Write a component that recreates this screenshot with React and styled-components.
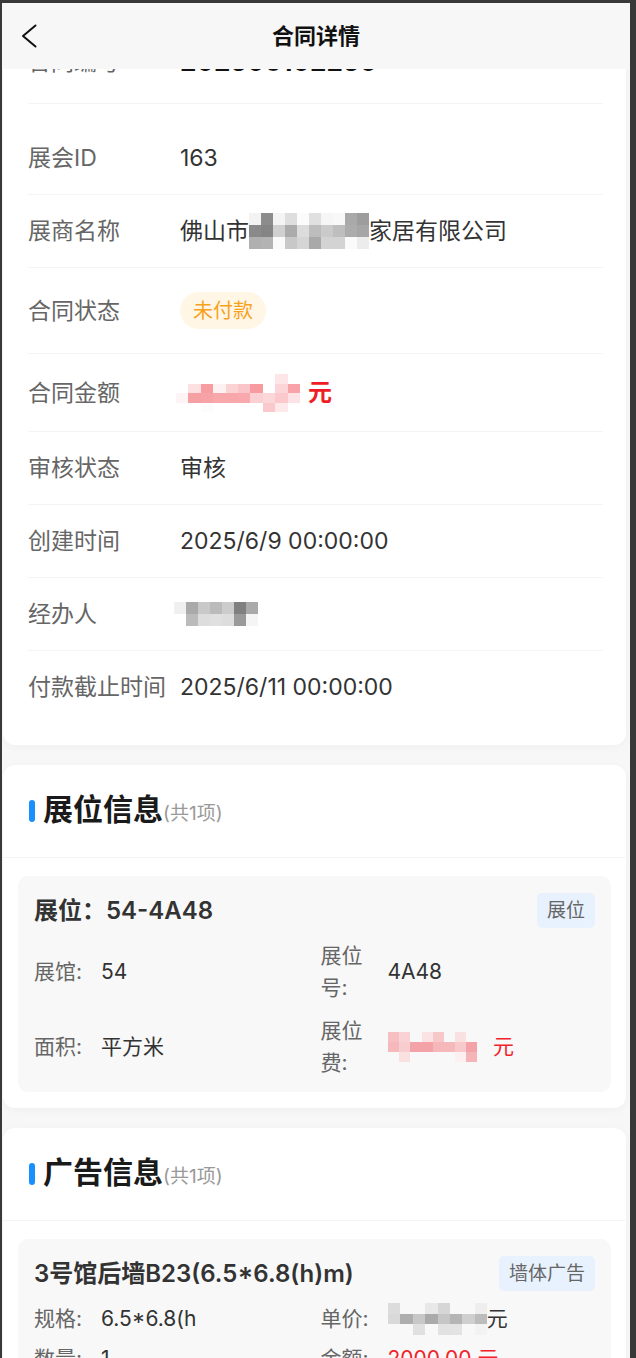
import React, { useLayoutEffect, useRef } from 'react';
import styled, { createGlobalStyle } from 'styled-components';

const GlobalStyle = createGlobalStyle`
  html, body {
    margin: 0;
    padding: 0;
    height: 100%;
    overflow: hidden;
    background: #393939;
  }

  body {
    font-family: Inter, "Noto Sans CJK SC", sans-serif;
    -webkit-font-smoothing: antialiased;
  }

  * {
    box-sizing: border-box;
  }
`;

const Screen = styled.div`
  display: flex;
  flex-direction: column;
  height: calc(100vh - 3px);
  margin: 3px 6px 0 2px;
  background: #f7f7f8;
  overflow: hidden;
`;

const NavBar = styled.header`
  flex: 0 0 66px;
  display: grid;
  grid-template-columns: 80px 1fr 80px;
  align-items: center;
  background: #f7f7f7;
`;

const BackButton = styled.button`
  display: flex;
  align-items: center;
  height: 40px;
  padding: 0 0 0 19px;
  border: 0;
  background: none;
  cursor: pointer;
`;

const NavTitle = styled.h1`
  margin: 0;
  text-align: center;
  font-size: 22px;
  line-height: 30px;
  font-weight: 700;
  color: #111;
`;

const ScrollArea = styled.main`
  flex: 1;
  overflow-y: auto;
  padding: 20px 4px 40px 1px;
  scrollbar-width: none;

  &::-webkit-scrollbar {
    display: none;
  }
`;

const Card = styled.section`
  background: #fff;
  border-radius: 12px;
  box-shadow: 0 2px 10px rgba(0, 0, 0, 0.035);
  margin-bottom: 20px;
`;

const InfoCard = styled(Card)`
  padding: 8px 23px 22px 25px;
`;

const InfoRow = styled.div`
  display: flex;
  align-items: center;
  padding: 20px 0;
  border-bottom: 1px solid #f4f4f4;

  &:last-child {
    border-bottom: none;
  }
`;

const ContractRow = styled(InfoRow)`
  padding: 21px 0 25px;
`;

const InfoList = styled.div`
  margin-top: 18px;
`;

const Label = styled.div`
  flex-shrink: 0;
  width: 140px;
  margin-right: 12px;
  font-size: 23px;
  line-height: 32px;
  color: #666;
`;

const Value = styled.div`
  display: flex;
  align-items: center;
  font-size: 23px;
  line-height: 32px;
  color: #333;
  white-space: nowrap;
`;

const ContractNo = styled(Value)`
  font-size: 26px;
  font-weight: 700;
  color: #111;
`;

const StatusBadge = styled.span`
  display: inline-flex;
  align-items: center;
  height: 37px;
  margin: 4px 0;
  padding: 0 13px;
  border-radius: 19px;
  background: #fff6e6;
  color: #f7a21b;
  font-size: 20px;
`;

const AmountUnit = styled.span`
  margin-left: 8px;
  font-size: 24px;
  font-weight: 700;
  color: #ee1d25;
`;

const SectionHeader = styled.div`
  display: flex;
  align-items: center;
  height: 93px;
  padding-left: 26px;
  border-bottom: 1px solid #f4f4f4;
`;

const Bar = styled.span`
  width: 6px;
  height: 22px;
  margin-right: 8px;
  border-radius: 3px;
  background: #1890ff;
`;

const Heading = styled.h2`
  display: flex;
  align-items: baseline;
  margin: 0;
  font-size: 30px;
  line-height: 40px;
  font-weight: 700;
  color: #1a1a1a;
`;

const Count = styled.span`
  font-size: 19px;
  font-weight: 400;
  color: #999;
`;

const SectionBody = styled.div`
  padding: 18px 15px 16px;
`;

const ItemCard = styled.div`
  padding: 17px 16px 14px;
  border-radius: 10px;
  background: #f8f8f8;
`;

const ItemHead = styled.div`
  display: flex;
  align-items: center;
  justify-content: space-between;
  margin-bottom: 12px;
`;

const ItemTitle = styled.div`
  font-size: 24px;
  line-height: 35px;
  font-weight: 600;
  color: #333;
`;

const Tag = styled.span`
  height: 35px;
  padding: 0 10px;
  border-radius: 5px;
  background: #e8f2fe;
  color: #666;
  font-size: 19px;
  line-height: 35px;
`;

const FieldGrid = styled.div`
  display: grid;
  grid-template-columns: 1fr 1fr;
  column-gap: 12px;
  row-gap: ${(p) => p.$rowGap}px;
  align-items: center;
`;

const Field = styled.div`
  display: flex;
  align-items: center;
`;

const FieldLabel = styled.div`
  flex-shrink: 0;
  width: 55px;
  margin-right: 12px;
  font-size: 21px;
  line-height: 1.5;
  color: #666;
`;

const FieldValue = styled.div`
  display: flex;
  align-items: center;
  font-size: 21px;
  line-height: 1.5;
  white-space: nowrap;
  color: ${(p) => (p.$red ? '#f0232b' : '#333')};
`;

const Unit = styled.span`
  margin-left: ${(p) => p.$gap || 0}px;
`;

// the blur blocks may stick out of the text line without growing the row
const MosaicBox = styled.span`
  display: block;
  margin: ${(p) => -(p.$bleed || 0)}px 0 ${(p) => -(p.$bleed || 0)}px ${(p) => p.$shift || 0}px;
`;

const Chevron = () => (
  <svg width="16" height="24" viewBox="0 0 16 24">
    <polyline points="14.5,1.5 2,12 14.5,22.5" fill="none" stroke="#111" strokeWidth="2" strokeLinejoin="round" strokeLinecap="round" />
  </svg>
);

// pixelated blocks hiding private data in the screenshot
const Mosaic = ({ rows, cw, ch, bleed, shift }) => (
  <MosaicBox $bleed={bleed} $shift={shift}>
    <svg width={rows[0].length * cw} height={rows.length * ch} shapeRendering="crispEdges" style={{ display: 'block' }}>
      {rows.map((row, r) =>
        row.map((c, i) => (c ? <rect key={`${r}-${i}`} x={i * cw} y={r * ch} width={cw} height={ch} fill={c} /> : null))
      )}
    </svg>
  </MosaicBox>
);

const companyBlur = [
  ['#f3f3f3', '#8c8c8c', '#f4f4f4', '#dedede', '#fbfbfb', '#e0e0e0', '#f6f6f6', '#f8f8f8', '#a9a9a9', '#9d9d9d'],
  ['#8a8a8a', '#858585', '#d0d0d0', '#ababab', '#dcdcdc', '#bdbdbd', '#cacaca', '#bebebe', '#acacac', '#a6a6a6'],
  ['#b0b0b0', '#b3b3b3', '#fafafa', '#c8c8c8', '#d5d5d5', '#a9a9a9', '#d3d3d3', '#d3d3d3', '#fafafa', '#ececec'],
];

const amountBlur = [
  [null, null, null, null, null, null, null, null, '#fde6e8', null],
  [null, '#fde0e2', '#f79da1', '#fdf1f2', '#fbd3d5', '#f9c5c8', '#f89ba0', null, '#fbd5d8', '#f7a3a7'],
  ['#fdf4f5', '#f7a0a4', '#f7a2a6', '#f8a7ab', '#f8a7ab', '#f9a9ad', '#fbd0d3', '#fcd7d9', '#fbc9cc', '#fde3e5'],
  [null, null, '#fcfcfc', null, null, null, null, '#fbc9cb', '#fde9ea', null],
];

const handlerBlur = [
  ['#f0f0f0', '#aaaaaa', '#c9c9c9', '#bbbbbb', '#cccccc', '#808080', '#aaaaaa'],
  [null, '#bbbbbb', '#dddddd', '#e0e0e0', '#dddddd', '#9a9a9a', '#f5f5f5'],
];

const boothFeeBlur = [
  ['#f6c0c3', '#f8d2d4', null, '#fbe2e3', '#f6c8ca', null, '#f9e0e1', null],
  ['#f5b8bb', '#f8cdd0', '#f3a3a7', '#f3a3a7', '#f6b7ba', '#f5b9bc', '#f7c9cb', '#f3a3a7'],
  [null, '#fae0e1', null, null, null, null, '#fcf0f0', '#f5b5b8'],
];

const priceBlur = [
  ['#dcdcdc', null, null, '#e8e8e8', '#d6d6d6', null, null, '#eeeeee'],
  ['#d9d9d9', '#aeaeae', '#c8c8c8', '#aaaaaa', '#c6c6c6', '#b5b5b5', '#cfcfcf', '#bcbcbc'],
  [null, null, '#e0e0e0', null, '#e2e2e2', '#e3e3e3', null, '#f3f3f3'],
];

const Section = ({ title, count, children }) => (
  <Card>
    <SectionHeader>
      <Bar />
      <Heading>
        {title}
        <Count>(共{count}项)</Count>
      </Heading>
    </SectionHeader>
    <SectionBody>{children}</SectionBody>
  </Card>
);

const App = () => {
  const scrollRef = useRef(null);

  useLayoutEffect(() => {
    // the page is shown already scrolled down a little
    if (scrollRef.current) scrollRef.current.scrollTop = 72;
  }, []);

  return (
    <>
      <GlobalStyle />
      <Screen>
        <NavBar>
          <BackButton aria-label="返回">
            <Chevron />
          </BackButton>
          <NavTitle>合同详情</NavTitle>
          <span />
        </NavBar>

        <ScrollArea ref={scrollRef}>
          <InfoCard>
            <ContractRow>
              <Label>合同编号</Label>
              <ContractNo>202506102250</ContractNo>
            </ContractRow>
            <InfoList>
              <InfoRow>
                <Label>展会ID</Label>
                <Value>163</Value>
              </InfoRow>
              <InfoRow>
                <Label>展商名称</Label>
                <Value>
                  佛山市
                  <Mosaic rows={companyBlur} cw={12} ch={12} bleed={2} />
                  家居有限公司
                </Value>
              </InfoRow>
              <InfoRow>
                <Label>合同状态</Label>
                <Value>
                  <StatusBadge>未付款</StatusBadge>
                </Value>
              </InfoRow>
              <InfoRow>
                <Label>合同金额</Label>
                <Value>
                  <Mosaic rows={amountBlur} cw={12.4} ch={9.5} bleed={0.5} shift={-4} />
                  <AmountUnit>元</AmountUnit>
                </Value>
              </InfoRow>
              <InfoRow>
                <Label>审核状态</Label>
                <Value>审核</Value>
              </InfoRow>
              <InfoRow>
                <Label>创建时间</Label>
                <Value>2025/6/9 00:00:00</Value>
              </InfoRow>
              <InfoRow>
                <Label>经办人</Label>
                <Value>
                  <Mosaic rows={handlerBlur} cw={12} ch={12} shift={-6} />
                </Value>
              </InfoRow>
              <InfoRow>
                <Label>付款截止时间</Label>
                <Value>2025/6/11 00:00:00</Value>
              </InfoRow>
            </InfoList>
          </InfoCard>

          <Section title="展位信息" count={1}>
            <ItemCard>
              <ItemHead>
                <ItemTitle>展位：54-4A48</ItemTitle>
                <Tag>展位</Tag>
              </ItemHead>
              <FieldGrid $rowGap={12}>
                <Field>
                  <FieldLabel>展馆:</FieldLabel>
                  <FieldValue>54</FieldValue>
                </Field>
                <Field>
                  <FieldLabel>展位号:</FieldLabel>
                  <FieldValue>4A48</FieldValue>
                </Field>
                <Field>
                  <FieldLabel>面积:</FieldLabel>
                  <FieldValue>平方米</FieldValue>
                </Field>
                <Field>
                  <FieldLabel>展位费:</FieldLabel>
                  <FieldValue $red>
                    <Mosaic rows={boothFeeBlur} cw={11.2} ch={10} />
                    <Unit $gap={16}>元</Unit>
                  </FieldValue>
                </Field>
              </FieldGrid>
            </ItemCard>
          </Section>

          <Section title="广告信息" count={1}>
            <ItemCard>
              <ItemHead>
                <ItemTitle>3号馆后墙B23(6.5*6.8(h)m)</ItemTitle>
                <Tag>墙体广告</Tag>
              </ItemHead>
              <FieldGrid $rowGap={8}>
                <Field>
                  <FieldLabel>规格:</FieldLabel>
                  <FieldValue>6.5*6.8(h</FieldValue>
                </Field>
                <Field>
                  <FieldLabel>单价:</FieldLabel>
                  <FieldValue>
                    <Mosaic rows={priceBlur} cw={12.4} ch={10.5} />
                    <Unit>元</Unit>
                  </FieldValue>
                </Field>
                <Field>
                  <FieldLabel>数量:</FieldLabel>
                  <FieldValue>1</FieldValue>
                </Field>
                <Field>
                  <FieldLabel>金额:</FieldLabel>
                  <FieldValue $red>2000.00 元</FieldValue>
                </Field>
              </FieldGrid>
            </ItemCard>
          </Section>
        </ScrollArea>
      </Screen>
    </>
  );
};

export default App;
